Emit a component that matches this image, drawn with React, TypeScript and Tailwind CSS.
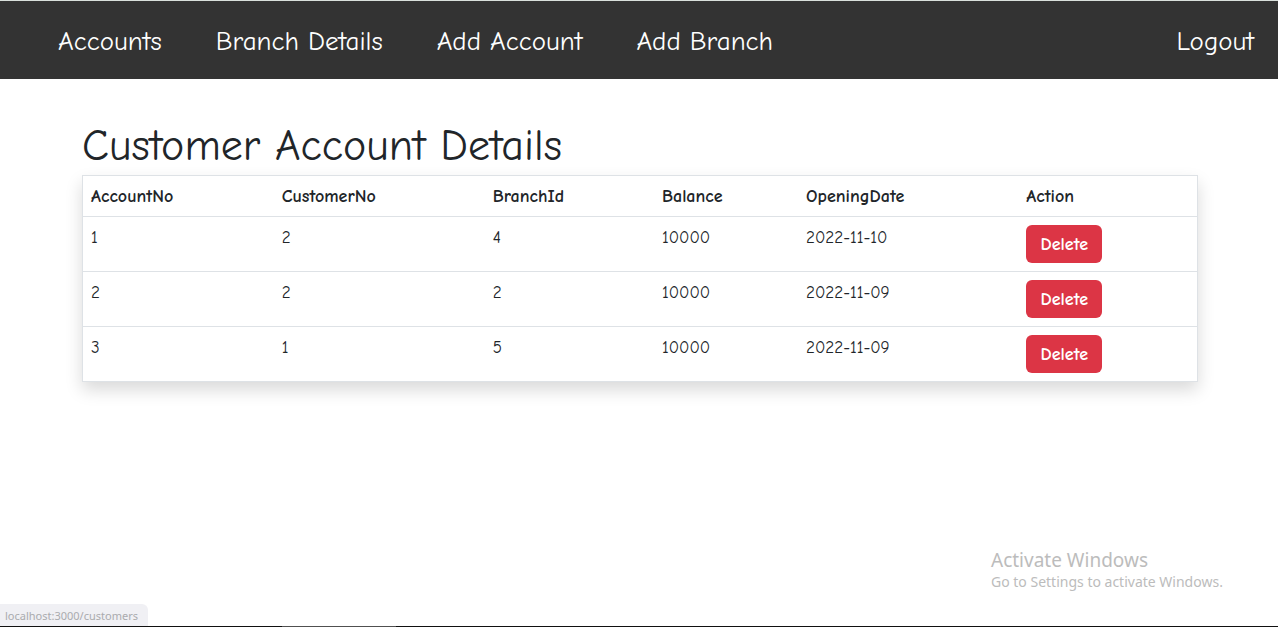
const navLinks = [
  { label: 'Accounts', href: '#accounts' },
  { label: 'Branch Details', href: '#branches' },
  { label: 'Add Account', href: '#add-account' },
  { label: 'Add Branch', href: '#add-branch' },
];

const accounts = [
  { accountNo: 1, customerNo: 2, branchId: 4, balance: 10000, openingDate: '2022-11-10' },
  { accountNo: 2, customerNo: 2, branchId: 2, balance: 10000, openingDate: '2022-11-09' },
  { accountNo: 3, customerNo: 1, branchId: 5, balance: 10000, openingDate: '2022-11-09' },
];

function NavBar() {
  return (
    <nav className="flex h-[79px] items-center justify-between border-t border-[#d9e0dc] bg-[#333333] pt-1 pr-6 pl-[58px] text-[27px] leading-9 text-white">
      <ul className="flex gap-[54px]">
        {navLinks.map((link) => (
          <li key={link.label}>
            <a href={link.href} className="whitespace-nowrap">
              {link.label}
            </a>
          </li>
        ))}
      </ul>
      <a href="#logout">Logout</a>
    </nav>
  );
}

function AccountTable() {
  return (
    <table className="w-full border-collapse border border-[#dee2e6] text-left align-top text-[17px] leading-6 shadow-[0_8px_16px_rgba(0,0,0,0.15)]">
      <thead>
        <tr className="border-b border-[#dee2e6] text-lg leading-6 font-bold">
          <th className="w-[191px] px-2 pt-[9px] pb-[7px]">AccountNo</th>
          <th className="w-[211px] px-2 pt-[9px] pb-[7px]">CustomerNo</th>
          <th className="w-[169px] px-2 pt-[9px] pb-[7px]">BranchId</th>
          <th className="w-[144px] px-2 pt-[9px] pb-[7px]">Balance</th>
          <th className="w-[220px] px-2 pt-[9px] pb-[7px]">OpeningDate</th>
          <th className="w-[179px] px-2 pt-[9px] pb-[7px]">Action</th>
        </tr>
      </thead>
      <tbody>
        {accounts.map((account) => (
          <tr key={account.accountNo} className="border-b border-[#dee2e6]">
            <td className="px-2 pt-[9px] pb-[7px] align-top">{account.accountNo}</td>
            <td className="px-2 pt-[9px] pb-[7px] align-top">{account.customerNo}</td>
            <td className="px-2 pt-[9px] pb-[7px] align-top">{account.branchId}</td>
            <td className="px-2 pt-[9px] pb-[7px] align-top">{account.balance}</td>
            <td className="px-2 pt-[9px] pb-[7px] align-top">{account.openingDate}</td>
            <td className="p-2 align-top">
              <button
                type="button"
                className="block h-[38px] w-[76px] rounded-md bg-[#dc3545] pt-0.5 text-center text-lg leading-6 font-semibold text-white"
              >
                Delete
              </button>
            </td>
          </tr>
        ))}
      </tbody>
    </table>
  );
}

export default function App() {
  return (
    <div className="flex min-h-screen flex-col bg-white font-['Comic_Sans_MS','Comic_Neue','Open_Sans',sans-serif] text-[#212529]">
      <NavBar />
      <main className="pt-[43px] pr-20 pl-[82px]">
        <h1 className="mb-[5px] text-[44px] leading-12">Customer Account Details</h1>
        <AccountTable />
      </main>

      <footer className="mt-auto font-['Segoe_UI','Noto_Sans',sans-serif]">
        <div className="flex justify-end pr-[51px]">
          <div className="w-[236px] whitespace-nowrap text-[#bcbcbc]">
            <p className="text-[19px] leading-6">Activate Windows</p>
            <p className="text-sm leading-5">Go to Settings to activate Windows.</p>
          </div>
        </div>
        <div className="mt-3 flex h-[22px] w-[148px] items-center rounded-tr-md bg-[#f0f0f4] pt-0.5 pl-[5px] text-[11px] text-[#aaabae]">
          localhost:3000/customers
        </div>
        <div className="flex h-px bg-[#111111] pl-[282px]">
          <div className="w-[114px] bg-[#505050]" />
        </div>
      </footer>
    </div>
  );
}
